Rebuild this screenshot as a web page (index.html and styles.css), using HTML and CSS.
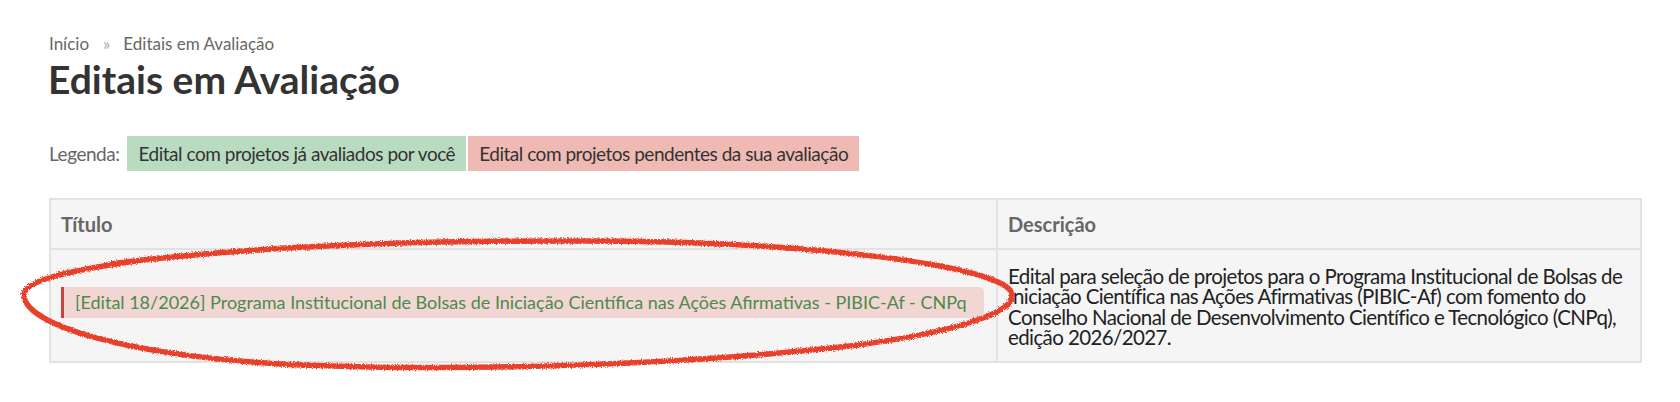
FILE: index.html
```html
<html>
<head>
    <title>Editais em Avaliação</title>
    <link rel="stylesheet" href="styles.css">
</head>

<body>
    <div class="page">
        <div class="breadcrumb">
            <a href="#">Início</a>
            <span class="sep">&raquo;</span>
            <span>Editais em Avaliação</span>
        </div>

        <h1 class="title">Editais em Avaliação</h1>

        <div class="legend">
            <span class="legend-label">Legenda:</span>
            <span class="tag tag-done">Edital com projetos já avaliados por você</span>
            <span class="tag tag-pending">Edital com projetos pendentes da sua avaliação</span>
        </div>

        <table class="editais">
            <thead>
                <tr>
                    <th class="col-title">Título</th>
                    <th>Descrição</th>
                </tr>
            </thead>
            <tbody>
                <tr>
                    <td>
                        <a class="edital pending" href="#">[Edital 18/2026] Programa Institucional de Bolsas de Iniciação Científica nas Ações Afirmativas - PIBIC-Af - CNPq</a>
                    </td>
                    <td class="desc">Edital para seleção de projetos para o Programa Institucional de Bolsas de Iniciação Científica nas Ações Afirmativas (PIBIC-Af) com fomento do Conselho Nacional de Desenvolvimento Científico e Tecnológico (CNPq), edição 2026/2027.</td>
                </tr>
            </tbody>
        </table>

        <!-- marcação feita à mão por cima da linha -->
        <svg class="mark" width="1680" height="402" viewBox="0 0 1680 402">
            <defs>
                <filter id="rough" x="-5%" y="-20%" width="110%" height="140%">
                    <feTurbulence type="fractalNoise" baseFrequency="0.8" numOctaves="2" result="noise"/>
                    <feDisplacementMap in="SourceGraphic" in2="noise" scale="4"/>
                </filter>
            </defs>
            <path filter="url(#rough)" fill="none" stroke="#e8412b" stroke-width="5.5" stroke-linecap="round"
                  d="M110 264 C 250 246, 420 240, 600 241 C 820 242, 990 266, 1010 290
                     C 1025 310, 960 332, 850 346 C 690 364, 480 372, 300 365
                     C 130 357, 22 325, 24 294 C 26 280, 70 270, 150 259"/>
        </svg>
    </div>
</body>
</html>
```

FILE: styles.css
```css
body {
    margin: 0;
    background: #fff;
    font-family: Lato, "Open Sans", sans-serif;
    color: #333;
}

.page {
    padding: 34px 38px 0 49px;
}

.breadcrumb {
    font-size: 17px;
    color: #666;
    display: flex;
    align-items: center;
    height: 18px;
}

.breadcrumb a {
    color: #666;
    text-decoration: none;
}

.breadcrumb .sep {
    color: #aaa;
    margin: 0 13px 0 14px;
}

.title {
    margin: 2px 0 0 -1px;
    font-size: 39px;
    font-weight: bold;
    color: #333;
    line-height: 50px;
}

.legend {
    display: flex;
    align-items: stretch;
    margin-top: 32px;
    height: 35px;
    font-size: 19px;
    letter-spacing: -0.48px;
}

.legend-label {
    display: flex;
    align-items: center;
    color: #666;
    margin-right: 8px;
}

.tag {
    display: flex;
    align-items: center;
    padding: 0 11px;
    color: #333;
    margin-right: 2px;
}

.tag-done {
    background-color: #b9dcc1;
}

.tag-pending {
    background-color: #f0bab4;
}

.editais {
    margin-top: 27px;
    width: 1593px;
    border-collapse: collapse;
    background: #f5f5f5;
    border: 2px solid #e2e2e2;
}

.editais th {
    text-align: left;
    font-size: 20px;
    color: #666;
    height: 50px;
    padding: 0 10px;
    border: 2px solid #e2e2e2;
}

.editais .col-title {
    width: 925px;
}

.editais td {
    border: 2px solid #e2e2e2;
    padding: 0 12px 0 10px;
    height: 113px;
    vertical-align: middle;
}

.edital {
    display: block;
    font-size: 18px;
    line-height: 31px;
    padding: 0 12px 0 11px;
    border-radius: 0 5px 5px 0;
    text-decoration: none;
    margin-top: -6px;
}

.edital.pending {
    background-color: #f2d6d3;
    border-left: 3px solid #c9443d;
    color: #4c8a4c;
}

.editais td.desc {
    font-size: 20.5px;
    line-height: 20.5px;
    letter-spacing: -0.6px;
    color: #222;
    padding: 2px 10px 0 10px;
}

.mark {
    position: absolute;
    left: 0;
    top: 0;
    pointer-events: none;
}
```
